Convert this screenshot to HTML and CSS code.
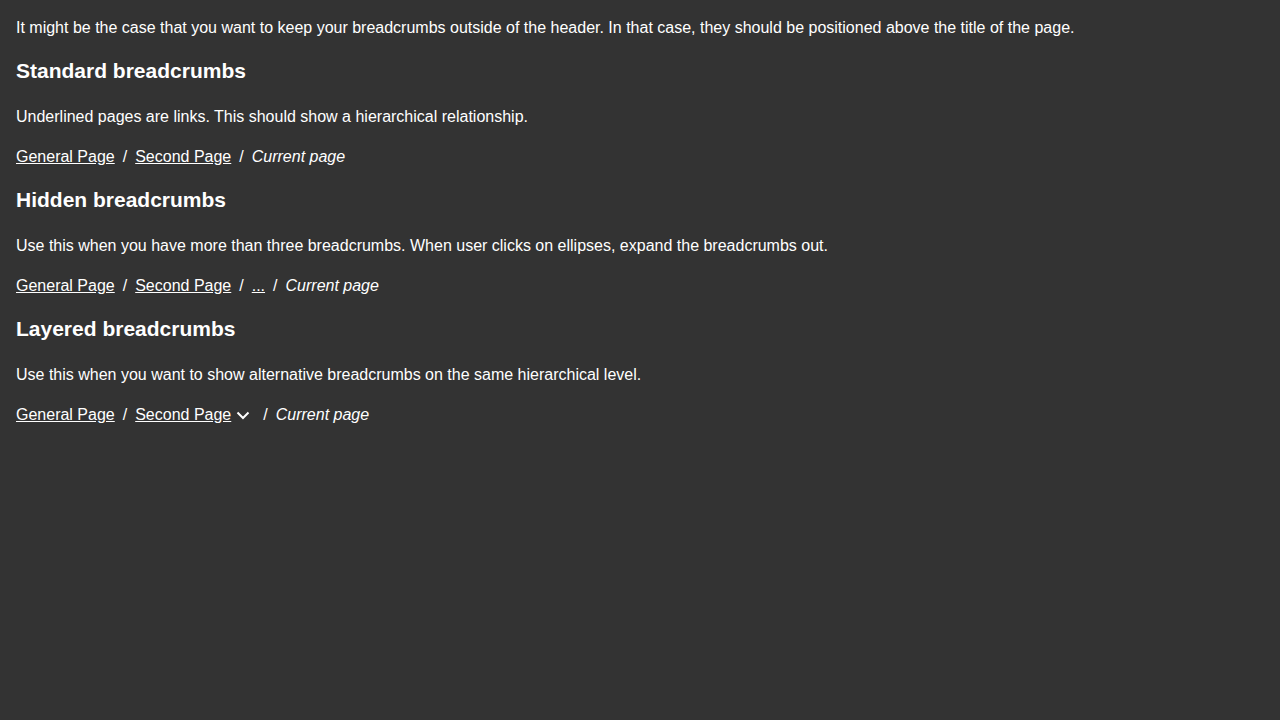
FILE: index.html
```html
<!DOCTYPE html>
<html lang="en">
<head>
<meta charset="utf-8">
<title>Breadcrumbs</title>
<link rel="stylesheet" href="styles.css">
</head>
<body>
<p class="text intro">It might be the case that you want to keep your breadcrumbs outside of the header. In that case, they should be positioned above the title of the page.</p>

<h3 class="heading">Standard breadcrumbs</h3>
<p class="text">Underlined pages are links. This should show a hierarchical relationship.</p>
<nav class="crumbs" aria-label="Breadcrumb">
  <a class="crumb-link" href="#">General Page</a><span class="sep">/</span><a class="crumb-link" href="#">Second Page</a><span class="sep">/</span><span class="current">Current page</span>
</nav>

<h3 class="heading">Hidden breadcrumbs</h3>
<p class="text">Use this when you have more than three breadcrumbs. When user clicks on ellipses, expand the breadcrumbs out.</p>
<nav class="crumbs" aria-label="Breadcrumb">
  <a class="crumb-link" href="#">General Page</a><span class="sep">/</span><a class="crumb-link" href="#">Second Page</a><span class="sep">/</span><a class="crumb-link" href="#">...</a><span class="sep">/</span><span class="current">Current page</span>
</nav>

<h3 class="heading">Layered breadcrumbs</h3>
<p class="text">Use this when you want to show alternative breadcrumbs on the same hierarchical level.</p>
<nav class="crumbs" aria-label="Breadcrumb">
  <a class="crumb-link" href="#">General Page</a><span class="sep">/</span><a class="crumb-link" href="#">Second Page</a><span class="chevron"><svg width="16" height="16" viewBox="0 0 16 16" aria-hidden="true"><path d="M2.5 5.5 L8 11 L13.5 5.5" fill="none" stroke="currentColor" stroke-width="2"/></svg></span><span class="sep">/</span><span class="current">Current page</span>
</nav>
</body>
</html>
```

FILE: styles.css
```css
html {
  background: #333333;
}
body {
  margin: 0;
  padding: 16px;
  background: #333333;
  color: #ffffff;
  font-family: "Liberation Sans", Arial, sans-serif;
  font-size: 16px;
  line-height: 1.5;
}
.text {
  margin: 16px 0;
}
.intro {
  margin-top: 0;
}
.heading {
  font-size: 21px;
  font-weight: 700;
  line-height: normal;
  margin: 19px 0 22px;
}
.crumbs {
  margin: 16px 0;
  display: flex;
  align-items: center;
}
.crumb-link {
  color: #ffffff;
  text-decoration: underline;
}
.sep {
  margin: 0 8px;
}
.current {
  font-style: italic;
}
.chevron {
  display: inline-flex;
  width: 20px;
  margin-left: 4px;
  align-items: center;
}
.chevron svg {
  display: block;
}
```
